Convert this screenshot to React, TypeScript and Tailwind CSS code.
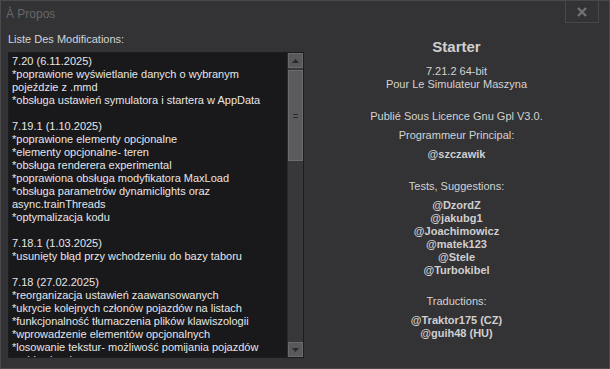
const changes = [
  "7.20 (6.11.2025)",
  "*poprawione wyświetlanie danych o wybranym",
  "pojeździe z .mmd",
  "*obsługa ustawień symulatora i startera w AppData",
  "",
  "7.19.1 (1.10.2025)",
  "*poprawione elementy opcjonalne",
  "*elementy opcjonalne- teren",
  "*obsługa renderera experimental",
  "*poprawiona obsługa modyfikatora MaxLoad",
  "*obsługa parametrów dynamiclights oraz",
  "async.trainThreads",
  "*optymalizacja kodu",
  "",
  "7.18.1 (1.03.2025)",
  "*usunięty błąd przy wchodzeniu do bazy taboru",
  "",
  "7.18 (27.02.2025)",
  "*reorganizacja ustawień zaawansowanych",
  "*ukrycie kolejnych członów pojazdów na listach",
  "*funkcjonalność tłumaczenia plików klawiszologii",
  "*wprowadzenie elementów opcjonalnych",
  "*losowanie tekstur- możliwość pomijania pojazdów",
  "archiwalnych",
];

const testers = ["@DzordZ", "@jakubg1", "@Joachimowicz", "@matek123", "@Stele", "@Turbokibel"];

export default function App() {
  return (
    <div
      className="w-[610px] h-[369px] bg-[#333235] border border-[#4a4a4c] flex flex-col text-[11px] leading-[13px]"
      style={{ fontFamily: '"Liberation Sans", Arial, sans-serif' }}
    >
      {/* title bar */}
      <div className="h-[26px] flex items-start justify-between">
        <span className="pl-[5px] pt-[5px] text-[12px] leading-[16px] text-[#68686a]">À Propos</span>
        <button className="-mt-[1px] mr-[10px] w-[34px] h-[23px] border border-[#48484a] flex items-center justify-center text-[#727274]">
          <svg width="10" height="10" viewBox="0 0 10 10">
            <path d="M1 1L9 9M9 1L1 9" stroke="currentColor" strokeWidth="2.4" />
          </svg>
        </button>
      </div>

      <div className="flex flex-1">
        {/* left column */}
        <div className="w-[303px] pl-[7px] flex flex-col">
          <div className="text-[#d4d4d4] pt-[6px] h-[25px]">Liste Des Modifications:</div>
          <div className="h-[306px] border border-[#1d1d1f] bg-[#19181b] flex overflow-hidden">
            <div className="flex-1 pl-[3px] pt-[2px] text-[#e6e6e6] overflow-hidden">
              {changes.map((line, i) => (
                <div key={i} className="h-[13px] whitespace-nowrap">
                  {line}
                </div>
              ))}
            </div>
            {/* scrollbar */}
            <div className="w-[16px] flex flex-col bg-[#38383b] border-l border-[#2a2a2c]">
              <div className="h-[15px] bg-[#59595c] border border-[#6a6a6d] flex items-center justify-center">
                <svg width="7" height="4" viewBox="0 0 7 4">
                  <path d="M0 4L3.5 0L7 4Z" fill="#2a2a2c" />
                </svg>
              </div>
              <div className="h-[91px] mt-[2px] bg-[#5b5b5e] border border-[#6c6c6f] flex items-center justify-center">
                <div className="flex flex-col gap-[2px]">
                  <div className="w-[5px] h-[1px] bg-[#2a2a2c]" />
                  <div className="w-[5px] h-[1px] bg-[#2a2a2c]" />
                </div>
              </div>
              <div className="flex-1" />
              <div className="h-[15px] bg-[#59595c] border border-[#6a6a6d] flex items-center justify-center">
                <svg width="7" height="4" viewBox="0 0 7 4">
                  <path d="M0 0L3.5 4L7 0Z" fill="#2a2a2c" />
                </svg>
              </div>
            </div>
          </div>
        </div>

        {/* right column */}
        <div className="flex-1 flex flex-col items-center text-[#d2d2d2] pt-[11px]">
          <div className="font-bold text-[15px] leading-[18px] text-[#cfcfcf]">Starter</div>
          <div className="mt-[9px]">7.21.2 64-bit</div>
          <div>Pour Le Simulateur Maszyna</div>
          <div className="mt-[19px]">Publié Sous Licence Gnu Gpl V3.0.</div>
          <div className="mt-[6px]">Programmeur Principal:</div>
          <div className="mt-[6px] font-bold text-[#cfcfcf]">@szczawik</div>
          <div className="mt-[19px]">Tests, Suggestions:</div>
          <div className="mt-[6px] flex flex-col items-center font-bold text-[#cfcfcf]">
            {testers.map((t) => (
              <div key={t}>{t}</div>
            ))}
          </div>
          <div className="mt-[18px]">Traductions:</div>
          <div className="mt-[6px] flex flex-col items-center font-bold text-[#cfcfcf]">
            <div>@Traktor175 (CZ)</div>
            <div>@guih48 (HU)</div>
          </div>
        </div>
      </div>
    </div>
  );
}
